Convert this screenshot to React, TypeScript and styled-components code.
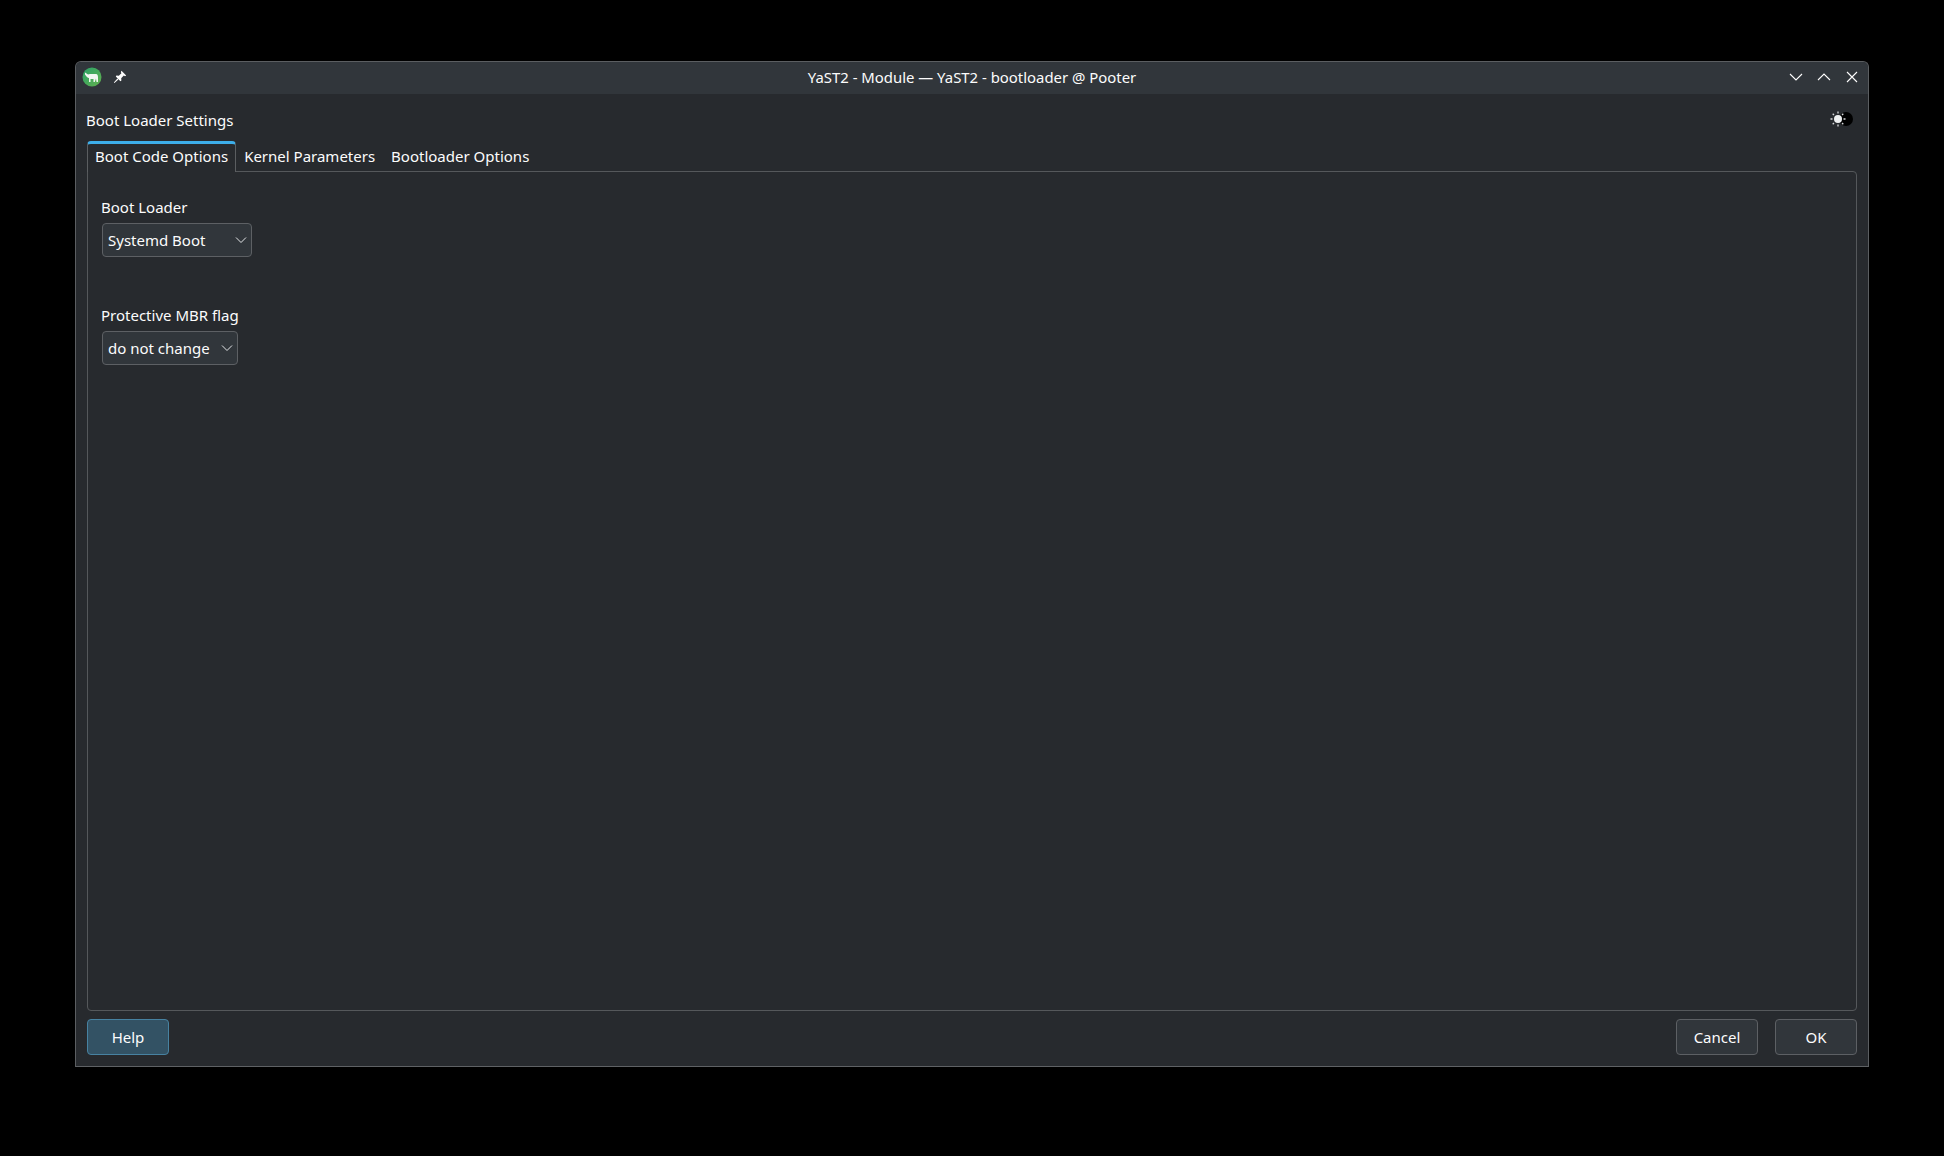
import React from "react";
import styled, { createGlobalStyle } from "styled-components";

const Global = createGlobalStyle`
  html, body { margin: 0; padding: 0; background: #000; }
  body { font-family: "Noto Sans", "Open Sans", sans-serif; font-size: 15px; color: #fcfcfc; }
`;
const Page = styled.div`
  width: 1944px; height: 1156px; box-sizing: border-box; padding: 61px 75px 89px 75px; background: #000; overflow: hidden;
`;
const Win = styled.div`
  height: 100%; box-sizing: border-box; display: flex; flex-direction: column; background: #272a2e;
  border: 1px solid #5b5e61; border-bottom-color: #5f6265; border-radius: 6px 6px 0 0; overflow: hidden;
`;
const TitleBar = styled.div`
  height: 32px; flex: none; background: #31363b; display: grid; grid-template-columns: 200px 1fr 200px; align-items: center; padding: 0 6px 2px;
  box-sizing: border-box;
`;
const TitleLeft = styled.div` display: flex; align-items: center; gap: 11px; `;
const TitleText = styled.div` text-align: center; color: #fcfcfc; font-size: 14.9px; `;
const TitleRight = styled.div` display: flex; justify-content: flex-end; align-items: center; gap: 14px; padding-right: 3px; `;
const Body = styled.div`
  flex: 1; min-height: 0; display: flex; flex-direction: column; padding: 0 11px 10px 11px;
`;
const HeadRow = styled.div`
  height: 47px; flex: none; display: flex; justify-content: space-between; align-items: center;
`;
const Heading = styled.div` margin-left: -1px; position: relative; top: 2px; `;
const Toggle = styled.div` display: flex; margin-right: 2px; position: relative; top: 1px; `;
const TabBar = styled.div` height: 30px; flex: none; display: flex; align-items: stretch; `;
const Tab = styled.div<{ $active?: boolean }>`
  box-sizing: border-box; padding: 0 8px; display: flex; align-items: center; position: relative;
  ${p => p.$active ? `
    background: #272a2e; border: 1px solid #5b5e61; border-bottom: none; border-top: 3px solid #3daee9;
    border-radius: 4px 4px 0 0; padding: 0 7px 5px; z-index: 1; height: 31px; margin-bottom: -1px;
  ` : ``}
`;
const Pane = styled.div`
  flex: 1; min-height: 0; box-sizing: border-box; border: 1px solid #55585b; border-radius: 0 4px 4px 4px; padding: 25px 13px;
  display: flex; flex-direction: column; align-items: flex-start;
`;
const Field = styled.div` display: flex; flex-direction: column; align-items: flex-start; margin-bottom: 48px; `;
const Label = styled.div` height: 20px; line-height: 20px; margin-bottom: 6px; `;
const Combo = styled.div<{ $w: number }>`
  width: ${p => p.$w}px; height: 34px; box-sizing: border-box; margin-left: 1px; background: #31363b; border: 1px solid #5d6064; border-radius: 4px;
  display: flex; align-items: center; justify-content: space-between; padding: 0 4px 0 5px;
`;
const Footer = styled.div`
  flex: none; display: flex; justify-content: space-between; margin-top: 8px; margin-bottom: 1px;
`;
const Btn = styled.div<{ $focus?: boolean }>`
  width: 82px; height: 36px; box-sizing: border-box; border-radius: 4px; display: flex; align-items: center; justify-content: center;
  background: ${p => p.$focus ? "#335264" : "#31363b"};
  border: 1px solid ${p => p.$focus ? "#4782a1" : "#5d6064"};
`;
const BtnGroup = styled.div` display: flex; gap: 17px; `;

const Chevron = ({ up, size = 14 }: { up?: boolean; size?: number }) => (
  <svg width={size} height={size} viewBox="0 0 14 14" fill="none" stroke="#fcfcfc" strokeWidth="1.1">
    <path d={up ? "M1 10 L7 4 L13 10" : "M1 4 L7 10 L13 4"} />
  </svg>
);
const SmallChevron = () => (
  <svg width="12" height="12" viewBox="0 0 12 12" fill="none" stroke="#e4e6e8" strokeWidth="1">
    <path d="M1 3.5 L6 8.5 L11 3.5" />
  </svg>
);
const CloseIcon = () => (
  <svg width="14" height="14" viewBox="0 0 14 14" fill="none" stroke="#fcfcfc" strokeWidth="1.1">
    <path d="M2 2 L12 12 M12 2 L2 12" />
  </svg>
);
const AppIcon = () => (
  <svg width="20" height="20" viewBox="0 0 20 20">
    <defs>
      <linearGradient id="g" x1="0" y1="0" x2="1" y2="1">
        <stop offset="0" stopColor="#2ba368" />
        <stop offset="1" stopColor="#62b04f" />
      </linearGradient>
    </defs>
    <circle cx="10" cy="10" r="9.5" fill="url(#g)" />
    <path d="M3 5.5 L6 7.5 L8 7 L14 7 C15.5 7 16 8.5 16 10.5 L16 15 L14.5 15 L14 11.5 L12.8 15 L11.5 15 L11.5 12 L8.5 12 L8.5 15 L7 15 L7 11 C5.5 11 4.5 9.5 3 7.5 Z" fill="#f2f6f2" />
  </svg>
);
const PinIcon = () => (
  <svg width="14" height="14" viewBox="0 0 14 14" fill="#fcfcfc">
    <path d="M8.5 0.8 L13.2 5.5 L12 6.2 L10.8 5.6 L8.2 8.2 L8.4 10.6 L7.4 11.2 L2.8 6.6 L3.4 5.6 L5.8 5.8 L8.4 3.2 L7.8 2 Z" />
    <path d="M4.4 8.6 L5.4 9.6 L1.4 13 L0.8 12.4 Z" />
  </svg>
);
const ThemeToggle = () => (
  <svg width="26" height="18" viewBox="0 0 26 18">
    <circle cx="17" cy="9" r="7" fill="#000" />
    <circle cx="9" cy="9" r="4" fill="#eef0f1" />
    <g stroke="#d6d8da" strokeWidth="1.3">
      <path d="M9 1.5 V3.5 M9 14.5 V16.5 M1.5 9 H3.5 M14.5 9 H16.5 M3.7 3.7 L5 5 M13 13 L14.3 14.3 M3.7 14.3 L5 13 M13 5 L14.3 3.7" />
    </g>
  </svg>
);

export default function App() {
  return (
    <Page>
      <Global />
      <Win>
        <TitleBar>
          <TitleLeft>
            <AppIcon />
            <PinIcon />
          </TitleLeft>
          <TitleText>YaST2 - Module — YaST2 - bootloader @ Pooter</TitleText>
          <TitleRight>
            <Chevron />
            <Chevron up />
            <CloseIcon />
          </TitleRight>
        </TitleBar>
        <Body>
          <HeadRow>
            <Heading>Boot Loader Settings</Heading>
            <Toggle><ThemeToggle /></Toggle>
          </HeadRow>
          <TabBar>
            <Tab $active>Boot Code Options</Tab>
            <Tab>Kernel Parameters</Tab>
            <Tab>Bootloader Options</Tab>
          </TabBar>
          <Pane>
            <Field>
              <Label>Boot Loader</Label>
              <Combo $w={150}>Systemd Boot<SmallChevron /></Combo>
            </Field>
            <Field>
              <Label>Protective MBR flag</Label>
              <Combo $w={136}>do not change<SmallChevron /></Combo>
            </Field>
          </Pane>
          <Footer>
            <Btn $focus>Help</Btn>
            <BtnGroup>
              <Btn>Cancel</Btn>
              <Btn>OK</Btn>
            </BtnGroup>
          </Footer>
        </Body>
      </Win>
    </Page>
  );
}
